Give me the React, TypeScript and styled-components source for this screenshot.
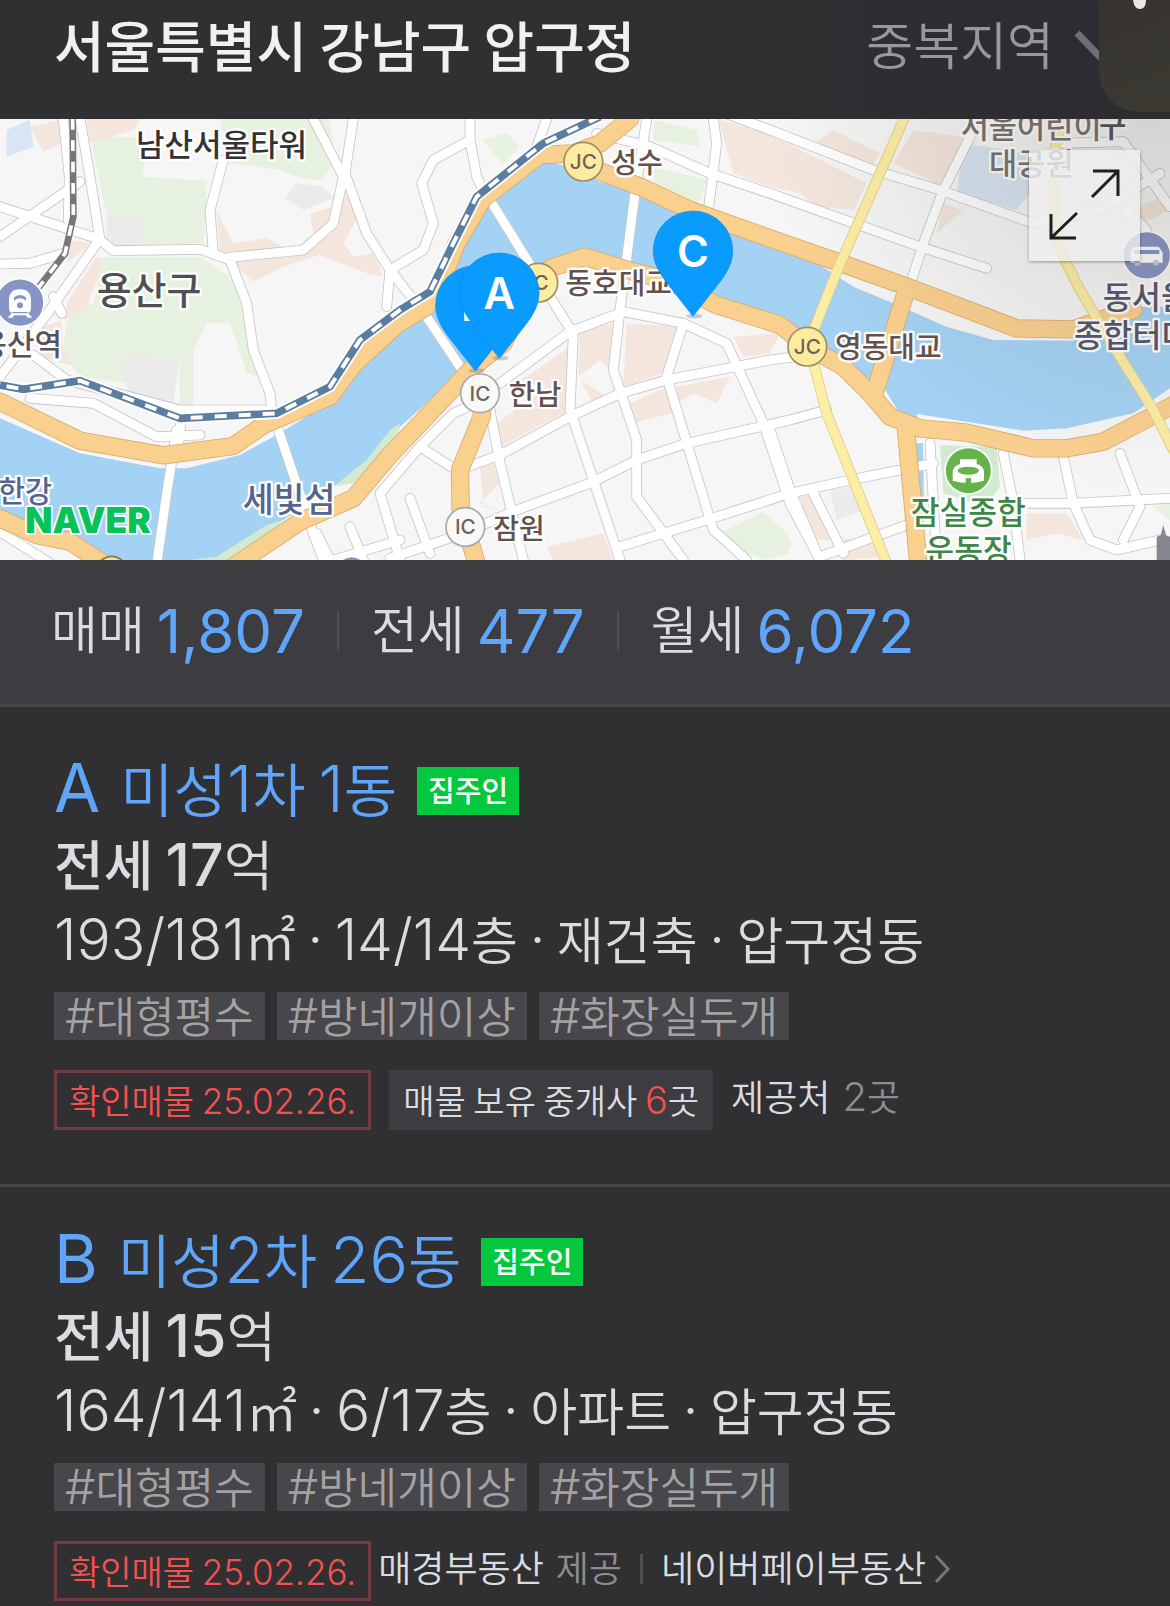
import React from "react";
import styled, { createGlobalStyle } from "styled-components";

const FONT = `Inter, "Noto Sans CJK KR", "Noto Sans", sans-serif`;
const HANGUL = `"Noto Sans CJK KR", "Noto Sans", sans-serif`;

const GlobalStyle = createGlobalStyle`
  *, *::before, *::after { box-sizing: border-box; }
  body {
    margin: 0;
    background: #303032;
    color: #dadde0;
    font-family: ${FONT};
    font-weight: 350;
  }
  h1, h2, p, ul, dl, dd { margin: 0; padding: 0; }
  h1, h2 { font-weight: inherit; }
  ul { list-style: none; }
  a { color: inherit; text-decoration: none; }
  button { border: 0; padding: 0; background: none; color: inherit; font: inherit; cursor: pointer; }
`;

const Page = styled.main`
  position: relative;
  overflow: hidden;
`;

/* Korean copy sets its digits and signs a step larger than the syllables. */

const Num = styled.span<{ $size: number }>`
  font-size: ${(p) => p.$size}px;
  line-height: 1;
`;

const Ko = styled.span`
  font-family: ${HANGUL};
  line-height: 1;
`;

function Mixed({ text, num }: { text: string; num: number }) {
  return (
    <>
      {text
        .split(/([0-9#/.,·]+)/)
        .filter(Boolean)
        .map((run, i) =>
          /^[0-9#/.,·]/.test(run) ? (
            <Num key={i} $size={num}>
              {run}
            </Num>
          ) : (
            <Ko key={i}>{run}</Ko>
          ),
        )}
    </>
  );
}

/* ---------- header ---------- */

const Header = styled.header`
  display: flex;
  align-items: flex-start;
  justify-content: space-between;
  height: 119px;
  padding: 9px 42px 0 54px;
  background: linear-gradient(90deg, #303032 50%, #2d2c31 90%);
  line-height: 76px;
`;

const Region = styled.h1`
  color: #f1f1f3;
  font-size: 55px;
  font-weight: 500;
  line-height: 76px;
`;

const OverlapButton = styled.button`
  display: flex;
  align-items: center;
  gap: 20px;
  color: #98989b;
  font-size: 51px;
  line-height: 76px;
`;

const FloatingPanel = styled.aside`
  position: absolute;
  top: 0;
  right: 0;
  width: 71px;
  height: 112px;
  border-bottom-left-radius: 40px;
  background: linear-gradient(160deg, #36332f, #3c3a33);
  svg { display: block; margin-left: 33px; }
`;

/* ---------- map ---------- */

const MapFrame = styled.section`
  position: relative;
  height: 441px;
  background: #f6f6f6;
`;

const MapDrawing = styled.svg`
  display: block;
  width: 100%;
  height: 100%;
  text { font-family: ${HANGUL}; }
`;

const ExpandButton = styled.button`
  position: absolute;
  top: 31px;
  right: 30px;
  width: 111px;
  height: 111px;
  background: rgba(240, 240, 240, 0.8);
  box-shadow: 0 1px 3px rgba(0, 0, 0, 0.35);
  svg { display: block; }
`;

/* ---------- totals ---------- */

const Totals = styled.dl`
  display: flex;
  height: 147px;
  padding: 31px 51px 0;
  background: #3d3c41;
  border-bottom: 3px solid #48474c;
  line-height: 80px;
`;

const Total = styled.div`
  display: flex;
  align-items: center;
  height: 80px;
  & + &::before {
    content: "";
    width: 2px;
    height: 39px;
    margin: 0 32px;
    background: #504f54;
  }
`;

const TotalName = styled.dt`
  font-size: 51px;
  margin-right: 12px;
`;

const TotalCount = styled.dd`
  color: #5fa6fb;
  font-size: 60px;
  font-weight: 400;
`;

/* ---------- listings ---------- */

const Listing = styled.li`
  padding: 37px 54px 54px;
  border-bottom: 3px solid #48474b;
  &:first-child { padding-top: 46px; }
  &:last-child { padding-bottom: 5px; border-bottom: 0; }
`;

const NameRow = styled.div`
  display: flex;
  align-items: center;
  gap: 20px;
  height: 76px;
`;

const Name = styled.h2`
  color: #5fa6fb;
  font-size: 58px;
  line-height: 75px;
  a { display: flex; align-items: baseline; gap: 20px; }
`;

const Letter = styled.span`
  font-size: 67px;
  font-weight: 400;
  line-height: 60px;
`;

const OwnerBadge = styled.span`
  padding: 0 11px 4px;
  background: #03c73c;
  color: #fff;
  font-family: ${HANGUL};
  font-size: 29px;
  font-weight: 500;
  line-height: 44px;
`;

const Line = styled.p`
  height: 75px;
  font-size: 51px;
  line-height: 75px;
  white-space: nowrap;
`;

const Price = styled(Line)`
  font-size: 54px;
  b { font-weight: 500; }
`;

const Tags = styled.ul`
  display: flex;
  gap: 12px;
  margin: 13px 0 30px;
`;

const Tag = styled.li`
  height: 48px;
  padding: 0 11px;
  background: #47464b;
  color: #a2a2a4;
  font-size: 43px;
  line-height: 46px;
`;

const Foot = styled.div`
  display: flex;
  align-items: center;
  height: 60px;
  white-space: nowrap;
`;

const Confirmed = styled.span`
  padding: 4px 12px 0;
  border: 3px solid #733b40;
  color: #f4514f;
  font-size: 34px;
  line-height: 50px;
`;

const Brokers = styled.a`
  margin-left: 18px;
  padding: 4px 14px 0;
  background: #3d3c40;
  font-size: 34px;
  line-height: 56px;
  em { color: #f4514f; font-style: normal; }
`;

const Source = styled.span<{ $gap: number }>`
  display: flex;
  align-items: center;
  gap: 12px;
  margin-left: ${(p) => p.$gap}px;
  padding-bottom: 4px;
  font-size: 36px;
  line-height: 54px;
`;

const Muted = styled.span`
  color: #8d8d90;
`;

const Bar = styled.i`
  width: 3px;
  height: 30px;
  margin: 0 6px;
  background: #504f54;
`;

const SourceLink = styled.a`
  display: flex;
  align-items: center;
  gap: 8px;
`;

/* ---------- map data ---------- */

const WATER =
  "M0,925 L240,1030 480,1075 560,1075 720,1035 830,975 1000,870 1080,750 1200,650 1290,570 1370,430 1470,265 1640,150 1700,170 1800,215 1900,240 2080,320 2310,410 2460,465 2560,530 2680,580 2840,650 2980,690 3220,692 3300,610 3400,590 3510,590 L3510,835 3400,910 3200,955 3070,962 2900,935 2750,912 2755,935 2710,930 2650,830 2560,780 2420,690 2310,650 2160,580 2000,520 1760,440 1620,480 1540,640 1400,770 1190,960 1120,1050 1000,1130 850,1230 700,1350 270,1350 150,1300 0,1200Z M2745,1000 l24,0 5,350 -20,0z";

const GREENS = [
  "M275,100 L330,80 430,80 430,200 620,212 612,400 430,405 430,318 320,318Z",
  "M310,440 L600,440 690,500 735,590 745,720 785,800 740,790 690,640 620,640 580,720 580,895 540,890 538,745 375,740 380,820 240,800 190,720 200,630 280,580Z",
  "M660,27 L985,27 1010,150 960,210 900,205 840,180 690,160Z",
  "M1450,90 L1520,70 1560,110 1510,160 1480,130Z",
  "M1960,30 L2090,60 2100,110 1960,90Z M1960,170 L2120,210 2090,290 1960,230Z",
  "M2160,1270 L2290,1205 2360,1270 2370,1330 2300,1350 2210,1320Z M2310,1230 L2360,1270 2380,1310 2310,1320Z M3460,1190 l50,-10 0,50z",
  "M2820,1005 L2990,1010 3000,1130 2960,1190 2830,1150Z",
  "M1100,1050 L1170,960 1200,940 1190,1000 1060,1120 1000,1130Z M650,1340 L800,1245 850,1230 760,1320 700,1350 570,1350Z",
];

const BEIGES = [
  "M90,50 L180,30 185,100 130,125Z M270,100 L260,27 420,27 400,60Z",
  "M215,390 L270,400 200,460Z M290,440 L320,450 270,560 260,610 190,630 200,580Z M130,650 L185,630 190,720 230,770 110,740Z",
  "M650,300 L700,400 800,385 850,410 660,430Z M930,310 L1000,290 1050,250 1080,310 1030,400 1060,440 1120,430 1150,500 1100,490 960,435 850,470 760,515 700,460 910,425 1000,340 940,370Z",
  "M1580,800 L1710,710 1710,900 1500,1010 1490,940 1640,830 1560,810Z",
  "M1740,665 L1840,640 1840,790 1800,750 1735,800Z M1880,640 L2030,650 1990,790 1870,830Z",
  "M1740,810 L1850,880 1780,880Z M2030,830 L2190,800 2150,880 2080,850 2030,880Z M1440,1070 L1480,1060 1500,1120 1440,1180 1490,1200 1450,1190Z",
  "M1890,880 L2000,830 2020,910 1970,920 1900,940Z M2200,680 L2340,670 2310,730 2230,740Z",
  "M2155,27 L2300,70 2600,220 2560,300 2450,290 2400,250 2310,230 2200,190Z M2500,60 L2640,130 2600,190 2440,100Z",
  "M2740,60 L2890,80 2830,230 2680,160Z M2830,280 L2890,300 2810,370Z",
  "M2400,1160 L2450,1150 2500,1290 2440,1290Z M2530,1290 L2640,1270 2660,1340 2530,1350Z M3080,1210 L3200,1210 3250,1290 3170,1270 3080,1290Z M1640,1310 L1810,1270 1840,1350 1660,1350Z",
  "M3400,300 L3500,250 3510,300 3430,340Z",
];

const BLUES = ["M2890,100 L3080,130 3090,250 3050,300 2870,250Z", "M20,60 L90,30 100,110 20,140Z"];
const GREYS = [
  "M320,318 h110 v90 h-90 l-20,-20z",
  "M375,738 L538,745 520,880 390,860 370,800Z",
  "M855,265 L890,220 970,230 1000,265 910,300Z",
  "M2490,1140 L2560,1130 2590,1200 2510,1230Z",
];

const STREETS = [
  "M240,27 L270,200 300,390 340,422 600,418 690,450 740,580 760,720 810,850 815,905",
  "M670,150 L630,300 640,430",
  "M690,442 L910,420 1000,340 1030,200 940,27",
  "M0,380 L240,215 M0,290 L290,385 M190,27 L208,200 205,330 M0,462 L90,460 190,430",
  "M290,400 L150,600 0,800 M160,560 L185,610",
  "M1060,27 L1035,190 1100,370 1170,480 1160,590",
  "M1170,480 L1270,420 1300,340 1265,220 1300,150 1410,90 1410,27 M1410,90 L1430,200 1465,270 M1640,27 L1610,110",
  "M1170,480 L1280,620 1380,770 M1470,270 L1600,480 1710,655",
  "M835,960 L940,1270 970,1350 M530,960 L500,1150 472,1350",
  "M100,735 L200,810 540,900 820,900 M90,865 L280,880 470,980 600,975 M545,910 L535,1010 M0,1265 L150,1360",
  "M1940,27 L1905,250 1860,600 1840,780 1910,990 1910,1160 2050,1350",
  "M1500,820 L1710,665 1870,605 2050,640 2180,700 2290,940 2370,1180 2460,1350",
  "M1720,670 L1710,900 1860,1350 M2050,640 L2000,800 2140,1260 2240,1350",
  "M1390,1075 L1500,1035 1710,920 1860,850 2000,810 2310,750 2430,735",
  "M1390,1270 L1550,1200 1770,1120 1910,1050 2060,1000 2370,930 2480,900",
  "M1860,1310 L2120,1230 2370,1150 2550,1110 2800,1060",
  "M1470,900 L1500,1060 1570,1350 M1360,1075 L1260,1010 1360,910 1450,870 M1260,1010 L1140,1150 1200,1350",
  "M1230,1165 L1290,1330 M1170,1345 L1390,1270 M950,1270 L990,1350 M1050,1250 L1090,1350 M1000,1350 L1200,1290",
  "M1790,70 L1950,110 2130,190 2310,250 2760,410 2960,475",
  "M2150,0 L2310,60 2620,180 2820,240 3100,340 3300,300 3480,190",
  "M2910,80 L2830,240 2770,400 2735,510 M2140,27 L2150,100 2125,300",
  "M2310,960 L2370,1140 2460,1350 M2440,1150 L2530,1330 M2460,1340 L2720,1245 M2790,1000 L2810,1350",
  "M3010,1030 L3040,1180 3060,1350 M3020,1180 L3220,1180 3510,1165 M3190,1040 L3220,1180 3270,1290 3350,1320 3480,1290 M3360,1030 L3420,1190 3370,1290",
  "M3180,100 L3370,95 3430,180 3510,290 M3380,300 L3440,360",
];

const EXPRESSWAYS = [
  "M0,875 L240,992 490,1036 700,1008 790,945 990,860 1060,765 1190,645 1280,590 1330,500 1370,400 1450,265 1620,135 1720,130 1800,100 1890,27",
  "M1750,165 L1920,230 2070,300 2310,385 2530,462 2720,530 3050,655 3220,658 3330,620 3400,600",
  "M700,1370 L900,1235 1060,1165 1170,1035 1270,930 1420,770 1510,700 1560,600 1650,475 1755,440 1900,485 2000,510 2150,585 2340,645 2430,715 2530,770 2610,850 2670,920 2760,955 2900,968 3100,1015 3200,1015 3310,995 3520,885",
  "M0,1225 L110,1275 210,1295 310,1360",
  "M1450,860 L1445,920 1380,1080 1382,1200 1430,1360",
  "M2718,545 L2620,860",
  "M2718,960 L2755,1360",
];

const HIGHWAYS = [
  "M2715,20 L2520,462 2425,700 2480,910 2660,1360",
  "M3190,27 L3160,130 3160,290 3180,420 3240,540 3360,740 3460,900 3520,1020",
];

const RAIL_DARK = "M218,27 L220,320 195,430 110,540";
const RAIL_BLUE =
  "M0,825 L70,838 240,812 540,925 830,910 990,830 1080,690 1200,600 1290,545 1360,400 1430,260 1630,100 1800,20";

type LabelData = { text: string; x: number; y: number; size: number; color: string };

const LABELS: LabelData[] = [
  { text: "남산서울타워", x: 408, y: 139, size: 93, color: "#333336" },
  { text: "용산구", x: 290, y: 582, size: 114, color: "#505054" },
  { text: "용산역", x: -62, y: 735, size: 90, color: "#55545c" },
  { text: "한강", x: -6, y: 1177, size: 88, color: "#56648c" },
  { text: "세빛섬", x: 728, y: 1206, size: 101, color: "#56648c" },
  { text: "성수", x: 1834, y: 188, size: 84, color: "#63524c" },
  { text: "동호대교", x: 1696, y: 552, size: 87, color: "#63524c" },
  { text: "한남", x: 1526, y: 885, size: 86, color: "#63524c" },
  { text: "잠원", x: 1480, y: 1286, size: 84, color: "#63524c" },
  { text: "영동대교", x: 2505, y: 744, size: 87, color: "#63524c" },
  { text: "구", x: 3288, y: 80, size: 100, color: "#505054" },
  { text: "서울어린이", x: 2882, y: 84, size: 92, color: "#78706e" },
  { text: "대공원", x: 2967, y: 196, size: 92, color: "#78706e" },
  { text: "동서울", x: 3308, y: 597, size: 95, color: "#55566c" },
  { text: "종합터미널", x: 3222, y: 712, size: 95, color: "#55566c" },
  { text: "잠실종합", x: 2732, y: 1241, size: 94, color: "#3f8746" },
  { text: "운동장", x: 2776, y: 1357, size: 94, color: "#3f8746" },
];

const JUNCTIONS = [
  { text: "JC", x: 1750, y: 155 },
  { text: "IC", x: 1615, y: 518, yellow: true },
  { text: "IC", x: 1440, y: 850 },
  { text: "IC", x: 1396, y: 1251 },
  { text: "JC", x: 2422, y: 710 },
];

const PINS = [
  { letter: "B", x: 1426, y: 586 },
  { letter: "A", x: 1498, y: 548 },
  { letter: "C", x: 2079, y: 422 },
];

function Roads({ paths, width, edge, fill }: { paths: string[]; width: number; edge: string; fill: string }) {
  const common = { fill: "none", strokeLinejoin: "round" as const, strokeLinecap: "round" as const };
  return (
    <>
      {paths.map((d) => (
        <path key={`e${d}`} d={d} stroke={edge} strokeWidth={width + 5} {...common} />
      ))}
      {paths.map((d) => (
        <path key={d} d={d} stroke={fill} strokeWidth={width} {...common} />
      ))}
    </>
  );
}

function Patches({ paths, fill }: { paths: string[]; fill: string }) {
  return (
    <>
      {paths.map((d) => (
        <path key={d} d={d} fill={fill} />
      ))}
    </>
  );
}

function AreaMap() {
  return (
    <MapDrawing viewBox="0 27 3510 1323" preserveAspectRatio="xMidYMid slice" role="img" aria-label="지도">
      <defs>
        <radialGradient id="dim" gradientUnits="userSpaceOnUse" cx="3450" cy="0" r="1150">
          <stop offset="0" stopColor="#4a463c" stopOpacity="0.2" />
          <stop offset="1" stopColor="#4a463c" stopOpacity="0" />
        </radialGradient>
      </defs>
      <rect y="27" width="3510" height="1323" fill="#f6f6f6" />
      <Patches paths={BEIGES} fill="#f4e6dc" />
      <Patches paths={GREENS.slice(0, 6)} fill="#e7f1df" />
      <Patches paths={BLUES} fill="#d8e6f3" />
      <Patches paths={GREYS} fill="#ebebeb" />
      <path d={WATER} fill="#a4d2f4" />
      <Patches paths={GREENS.slice(6)} fill="#d3ead0" />
      <Roads paths={STREETS} width={27} edge="#c6c6c8" fill="#ffffff" />
      <Roads paths={EXPRESSWAYS} width={50} edge="#dda868" fill="#fad08f" />
      <Roads paths={HIGHWAYS} width={27} edge="#e2cd83" fill="#fdeea6" />
      <g fill="none">
        <path d={RAIL_DARK} stroke="#77777a" strokeWidth="20" />
        <path d={RAIL_DARK} stroke="#fff" strokeWidth="11" strokeDasharray="32 32" />
        <path d={RAIL_BLUE} stroke="#fff" strokeWidth="34" />
        <path d={RAIL_BLUE} stroke="#5b7d9f" strokeWidth="23" />
        <path d={RAIL_BLUE} stroke="#fff" strokeWidth="12" strokeDasharray="36 36" strokeDashoffset="-20" />
      </g>

      <g stroke="#fff" strokeWidth="5">
        <circle cx="60" cy="578" r="72" fill="#8795c6" />
        <circle cx="3440" cy="436" r="72" fill="#8795c6" />
        <circle cx="2905" cy="1082" r="70" fill="#67b34b" />
        <circle cx="1055" cy="1385" r="46" fill="#8795c6" />
        <circle cx="335" cy="1385" r="46" fill="#fae48e" stroke="#8a7550" />
      </g>
      <g fill="#fff">
        <path d="M60,538 c25,0 33,14 33,34 v22 q0,16 -16,16 h-34 q-16,0 -16,-16 v-22 c0,-20 8,-34 33,-34z M38,606 l-15,17 h14 l6,-7 h34 l6,7 h14 l-15,-17z" />
        <path d="M3400,410 h76 l12,18 v30 h-97 v-30z" />
        <path d="M2880,1048 h50 v14 q22,6 22,26 v24 q-47,14 -94,0 v-24 q0,-20 22,-26z" />
      </g>
      <path d="M42,572 q18,-14 36,0 v-10 q-18,-14 -36,0z" fill="#8795c6" />
      <circle cx="60" cy="586" r="9" fill="#8795c6" />
      <path d="M3402,420 h76 v12 h-76z" fill="#8795c6" />
      <circle cx="3412" cy="458" r="9" fill="#c8c9d4" />
      <circle cx="3468" cy="458" r="9" fill="#c8c9d4" />
      <ellipse cx="2905" cy="1082" rx="32" ry="12" fill="#67b34b" />
      <path d="M2897,1104 h16 v16 h-16z" fill="#67b34b" />
      <path d="M3470,1350 v-70 l12,-4 8,-30 8,30 12,4 v70z" fill="#85878f" />

      {JUNCTIONS.map((j) => {
        const yellow = j.text === "JC" || j.yellow;
        return (
          <g key={`${j.x}`}>
            <circle cx={j.x} cy={j.y} r="58" fill={yellow ? "#fdeca0" : "#f8f8f8"} stroke={yellow ? "#a08e68" : "#a9a9a9"} strokeWidth="5" />
            <text x={j.x} y={j.y + 22} fontSize="62" fontWeight="500" textAnchor="middle" fill="#6f6258" style={{ fontFamily: "Inter, sans-serif" }}>
              {j.text}
            </text>
          </g>
        );
      })}

      {LABELS.map((l) => (
        <text key={l.text} x={l.x} y={l.y} fontSize={l.size} fontWeight="500" fill={l.color} stroke="#fff" strokeWidth="14" strokeLinejoin="round" paintOrder="stroke">
          {l.text}
        </text>
      ))}
      <text x="76" y="1270" fontSize="106" fontWeight="900" fill="#06c258" stroke="#fff" strokeWidth="10" strokeLinejoin="round" paintOrder="stroke" style={{ fontFamily: "Inter, sans-serif" }}>
        NAVER
      </text>

      {PINS.map((p) => (
        <g key={p.letter} transform={`translate(${p.x} ${p.y})`}>
          <ellipse cx="4" cy="196" rx="24" ry="7" fill="#5b7d9f" opacity="0.35" />
          <path d="M0,197 L-82,92 C-104,62 -119,34 -119,0 A119,119 0 0 1 119,0 C119,34 104,62 82,92Z" fill="#0a9bff" stroke="#0b86dd" strokeWidth="2" />
          <text y="48" fontSize="130" fontWeight="600" textAnchor="middle" fill="#fff" style={{ fontFamily: "Inter, sans-serif" }}>
            {p.letter}
          </text>
        </g>
      ))}
      <rect y="27" width="3510" height="1323" fill="url(#dim)" />
    </MapDrawing>
  );
}

/* ---------- page data ---------- */

const TOTALS = [
  { name: "매매", count: "1,807" },
  { name: "전세", count: "477" },
  { name: "월세", count: "6,072" },
];

const TAGS = ["#대형평수", "#방네개이상", "#화장실두개"];

type ListingData = { letter: string; name: string; price: string; detail: string; foot: React.ReactNode };

const LISTINGS: ListingData[] = [
  {
    letter: "A",
    name: "미성1차 1동",
    price: "전세 17",
    detail: "193/181㎡ · 14/14층 · 재건축 · 압구정동",
    foot: (
      <>
        <Brokers href="#brokers">
          <Ko>매물 보유 중개사 </Ko>
          <em>
            <Mixed text="6" num={38} />
          </em>
          <Ko>곳</Ko>
        </Brokers>
        <Source $gap={18}>
          제공처{" "}
          <Muted>
            <Mixed text="2곳" num={40} />
          </Muted>
        </Source>
      </>
    ),
  },
  {
    letter: "B",
    name: "미성2차 26동",
    price: "전세 15",
    detail: "164/141㎡ · 6/17층 · 아파트 · 압구정동",
    foot: (
      <Source $gap={7}>
        매경부동산 <Muted>제공</Muted>
        <Bar />
        <SourceLink href="#source">
          네이버페이부동산
          <svg width="16" height="28" viewBox="0 0 16 28" fill="none" stroke="#77777a" strokeWidth="3" aria-hidden="true">
            <path d="M2,1 L14,14 2,27" />
          </svg>
        </SourceLink>
      </Source>
    ),
  },
];

export default function App() {
  return (
    <Page>
      <GlobalStyle />
      <Header>
        <Region>
          <Mixed text="서울특별시 강남구 압구정" num={55} />
        </Region>
        <OverlapButton type="button">
          중복지역
          <svg width="54" height="34" viewBox="0 0 54 34" fill="none" stroke="#6f6f73" strokeWidth="7" aria-hidden="true">
            <path d="M3,3 L27,28 51,3" />
          </svg>
        </OverlapButton>
      </Header>
      <MapFrame>
        <AreaMap />
        <ExpandButton type="button" aria-label="지도 크게 보기">
          <svg width="111" height="111" viewBox="0 0 111 111" fill="none" stroke="#1e1e1f" strokeWidth="3" aria-hidden="true">
            <path d="M63,47 L89,21 M64,21 H89 V46 M48,63 L22,88 M22,64 V88 H47" />
          </svg>
        </ExpandButton>
      </MapFrame>
      <Totals>
        {TOTALS.map((t) => (
          <Total key={t.name}>
            <TotalName>{t.name}</TotalName>
            <TotalCount>{t.count}</TotalCount>
          </Total>
        ))}
      </Totals>
      <ul>
        {LISTINGS.map((item) => (
          <Listing key={item.letter}>
            <NameRow>
              <Name>
                <a href={`#${item.letter}`}>
                  <Letter>{item.letter}</Letter>
                  <span>
                    <Mixed text={item.name} num={64} />
                  </span>
                </a>
              </Name>
              <OwnerBadge>집주인</OwnerBadge>
            </NameRow>
            <Price>
              <b>
                <Mixed text={item.price} num={59} />
              </b>
              <Ko>억</Ko>
            </Price>
            <Line>
              <Mixed text={item.detail} num={57} />
            </Line>
            <Tags>
              {TAGS.map((tag) => (
                <Tag key={tag}>
                  <Mixed text={tag} num={48} />
                </Tag>
              ))}
            </Tags>
            <Foot>
              <Confirmed>
                <Mixed text="확인매물 25.02.26." num={35} />
              </Confirmed>
              {item.foot}
            </Foot>
          </Listing>
        ))}
      </ul>
      <FloatingPanel aria-hidden="true">
        <svg width="16" height="10" viewBox="0 0 16 10">
          <path d="M1,0 C2,6 4,9 8,9 C12,9 14,5 14,0Z" fill="#e9e8e6" />
        </svg>
      </FloatingPanel>
    </Page>
  );
}
